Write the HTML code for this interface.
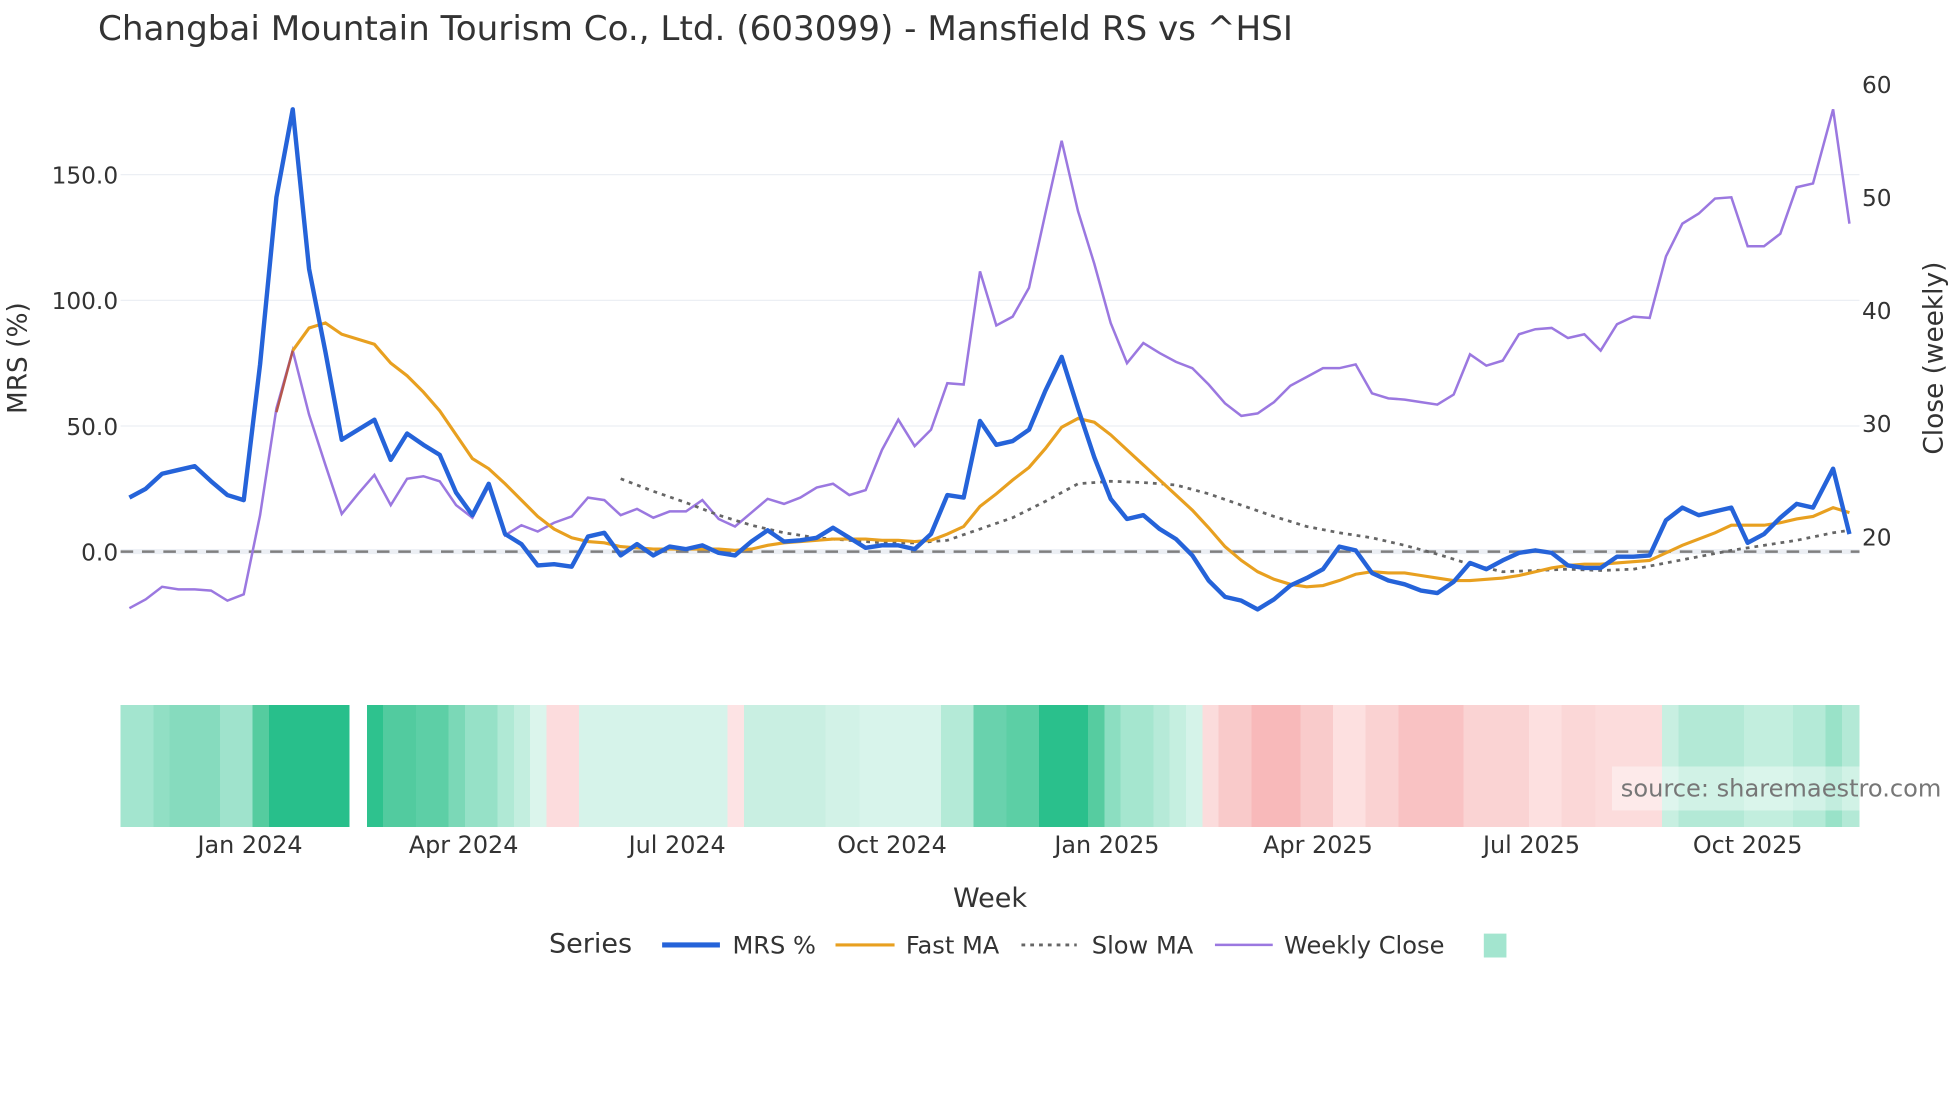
<!DOCTYPE html>
<html><head><meta charset="utf-8"><style>html,body{margin:0;padding:0;background:#fff;}svg{display:block}</style></head>
<body>
<svg width="1960" height="1102" viewBox="0 0 1560 877" preserveAspectRatio="none" xmlns="http://www.w3.org/2000/svg" font-family="DejaVu Sans, Liberation Sans, sans-serif">
<rect width="1560" height="877" fill="#fff"/>
<text x="78" y="32" font-size="27.2" fill="#333">Changbai Mountain Tourism Co., Ltd. (603099) - Mansfield RS vs ^HSI</text>
<g stroke="#eceff4" stroke-width="1">
<line x1="96" y1="139" x2="1480" y2="139"/><line x1="96" y1="239" x2="1480" y2="239"/><line x1="96" y1="339" x2="1480" y2="339"/>
</g>
<line x1="96" y1="439" x2="1480" y2="439" stroke="#eceff4" stroke-width="4"/>
<line x1="96" y1="439" x2="1480" y2="439" stroke="#7f7f7f" stroke-width="2" stroke-dasharray="10,7"/>
<g font-size="18.5" fill="#333">
<text x="94" y="146" text-anchor="end">150.0</text>
<text x="94" y="246" text-anchor="end">100.0</text>
<text x="94" y="346" text-anchor="end">50.0</text>
<text x="94" y="446" text-anchor="end">0.0</text>
<text x="1482" y="74">60</text><text x="1482" y="164">50</text><text x="1482" y="254">40</text><text x="1482" y="344">30</text><text x="1482" y="434">20</text>
</g>
<text transform="translate(21,285) rotate(-90)" font-size="21" fill="#333" text-anchor="middle">MRS (%)</text>
<text transform="translate(1546,285) rotate(-90)" font-size="21" fill="#333" text-anchor="middle">Close (weekly)</text>

<polyline fill="none" stroke="#9b78e0" stroke-width="2" points="103,484 116,477 129,467 142,469 155,469 168,470 181,478 194,473 207,410 220,325 233,279 246,330 259,370 272,409 285,393 298,378 311,402 324,381 337,379 350,383 363,402 376,412 389,387 402,426 415,418 428,423 441,416 455,411 468,396 481,398 494,410 507,405 520,412 533,407 546,407 559,398 572,413 585,419 598,408 611,397 624,401 637,396 650,388 663,385 676,394 689,390 702,358 715,334 728,355 741,342 754,305 767,306 780,216 793,259 806,252 819,229 832,170 845,112 858,168 871,210 884,257 897,289 910,273 923,281 936,288 949,293 962,306 975,321 988,331 1001,329 1014,320 1027,307 1040,300 1053,293 1066,293 1079,290 1092,313 1105,317 1118,318 1131,320 1144,322 1157,314 1170,282 1183,291 1196,287 1209,266 1222,262 1235,261 1248,269 1261,266 1274,279 1287,258 1300,252 1313,253 1326,204 1339,178 1352,170 1365,158 1378,157 1391,196 1404,196 1417,186 1430,149 1443,146 1459,87 1472,178"/>
<polyline fill="none" stroke="#666" stroke-width="2.2" stroke-dasharray="3,4" points="494,381 520,391 546,400 572,410 598,418 624,424 650,428 676,430 702,432 728,432 754,430 780,421 806,412 832,399 858,385 884,383 910,384 936,386 962,393 988,402 1014,411 1040,419 1066,424 1092,428 1118,434 1144,441 1170,449 1196,455 1222,454 1248,453 1274,454 1300,453 1326,448 1352,443 1378,438 1404,434 1430,430 1459,424 1472,422"/>
<polyline fill="none" stroke="#b5564e" stroke-width="2" points="220,328 233,279"/>
<polyline fill="none" stroke="#e8a020" stroke-width="2.5" points="233,279 246,261 259,257 272,266 285,270 298,274 311,289 324,299 337,312 350,327 363,346 376,365 389,373 402,385 415,398 428,411 441,421 455,428 468,431 481,432 494,435 507,436 520,437 533,437 546,437 559,437 572,437 585,438 598,437 611,434 624,432 637,431 650,430 663,429 676,429 689,429 702,430 715,430 728,431 741,430 754,425 767,419 780,403 793,393 806,382 819,372 832,357 845,340 858,333 871,336 884,346 897,358 910,370 923,382 936,394 949,406 962,420 975,435 988,446 1001,455 1014,461 1027,465 1040,467 1053,466 1066,462 1079,457 1092,455 1105,456 1118,456 1131,458 1144,460 1157,462 1170,462 1183,461 1196,460 1209,458 1222,455 1235,452 1248,450 1261,449 1274,449 1287,448 1300,447 1313,446 1326,440 1339,434 1352,429 1365,424 1378,418 1391,418 1404,418 1417,416 1430,413 1443,411 1459,404 1472,408"/>
<polyline fill="none" stroke="#2563d9" stroke-width="3.5" stroke-linejoin="round" points="103,396 116,389 129,377 142,374 155,371 168,383 181,394 194,398 207,290 220,157 233,87 246,214 259,280 272,350 285,342 298,334 311,366 324,345 337,354 350,362 363,392 376,410 389,385 402,425 415,433 428,450 441,449 455,451 468,427 481,424 494,442 507,433 520,442 533,435 546,437 559,434 572,440 585,442 598,431 611,422 624,431 637,430 650,428 663,420 676,428 689,436 702,434 715,434 728,437 741,425 754,394 767,396 780,335 793,354 806,351 819,342 832,311 845,284 858,325 871,364 884,397 897,413 910,410 923,421 936,429 949,442 962,462 975,475 988,478 1001,485 1014,477 1027,466 1040,460 1053,453 1066,435 1079,438 1092,456 1105,462 1118,465 1131,470 1144,472 1157,463 1170,448 1183,453 1196,446 1209,440 1222,438 1235,440 1248,450 1261,452 1274,452 1287,443 1300,443 1313,442 1326,414 1339,404 1352,410 1365,407 1378,404 1391,432 1404,425 1417,412 1430,401 1443,404 1459,373 1472,425"/>

<g shape-rendering="crispEdges">
<rect x="96" y="561" width="26" height="97" fill="#a3e5cf"/><rect x="122" y="561" width="13" height="97" fill="#91dfc4"/><rect x="135" y="561" width="40" height="97" fill="#86dbbe"/><rect x="175" y="561" width="26" height="97" fill="#9fe3cc"/><rect x="201" y="561" width="13" height="97" fill="#55cc9f"/><rect x="214" y="561" width="64" height="97" fill="#28bf8b"/>
<rect x="292" y="561" width="13" height="97" fill="#2ec28e"/><rect x="305" y="561" width="26" height="97" fill="#52cb9f"/><rect x="331" y="561" width="26" height="97" fill="#5dcfa6"/><rect x="357" y="561" width="13" height="97" fill="#7bd8b7"/><rect x="370" y="561" width="26" height="97" fill="#96e1c7"/><rect x="396" y="561" width="13" height="97" fill="#b0e9d5"/><rect x="409" y="561" width="13" height="97" fill="#c3eedf"/><rect x="422" y="561" width="13" height="97" fill="#dbf5ec"/><rect x="435" y="561" width="26" height="97" fill="#fcdcdd"/><rect x="461" y="561" width="118" height="97" fill="#d6f3ea"/><rect x="579" y="561" width="13" height="97" fill="#fde3e4"/><rect x="592" y="561" width="65" height="97" fill="#c9efe2"/><rect x="657" y="561" width="27" height="97" fill="#d2f2e7"/><rect x="684" y="561" width="65" height="97" fill="#d8f4eb"/><rect x="749" y="561" width="26" height="97" fill="#b4ead7"/><rect x="775" y="561" width="26" height="97" fill="#69d2ad"/><rect x="801" y="561" width="26" height="97" fill="#5ccfa5"/><rect x="827" y="561" width="39" height="97" fill="#2ac08c"/><rect x="866" y="561" width="13" height="97" fill="#56cca0"/><rect x="879" y="561" width="13" height="97" fill="#8cdec1"/><rect x="892" y="561" width="26" height="97" fill="#a5e6cf"/><rect x="918" y="561" width="13" height="97" fill="#b6ead8"/><rect x="931" y="561" width="13" height="97" fill="#c5efe0"/><rect x="944" y="561" width="13" height="97" fill="#d5f3e9"/><rect x="957" y="561" width="13" height="97" fill="#fbdcdc"/><rect x="970" y="561" width="26" height="97" fill="#f9caca"/><rect x="996" y="561" width="39" height="97" fill="#f8b9ba"/><rect x="1035" y="561" width="26" height="97" fill="#f9cbcb"/><rect x="1061" y="561" width="26" height="97" fill="#fde0e0"/><rect x="1087" y="561" width="26" height="97" fill="#fad2d2"/><rect x="1113" y="561" width="52" height="97" fill="#f9c2c3"/><rect x="1165" y="561" width="52" height="97" fill="#fad3d3"/><rect x="1217" y="561" width="26" height="97" fill="#fde0e0"/><rect x="1243" y="561" width="27" height="97" fill="#fbd7d7"/><rect x="1270" y="561" width="53" height="97" fill="#fcdcdc"/><rect x="1323" y="561" width="13" height="97" fill="#c8efe1"/><rect x="1336" y="561" width="52" height="97" fill="#b3e9d6"/><rect x="1388" y="561" width="39" height="97" fill="#c2eede"/><rect x="1427" y="561" width="26" height="97" fill="#b4ead7"/><rect x="1453" y="561" width="13" height="97" fill="#99e2c8"/><rect x="1466" y="561" width="14" height="97" fill="#b3e9d6"/>
</g>
<rect x="1283" y="610" width="197" height="35" fill="#fff" fill-opacity="0.4"/>
<text x="1290" y="634" font-size="19.2" fill="#777">source: sharemaestro.com</text>
<g font-size="19" fill="#333" text-anchor="middle">
<text x="199" y="679">Jan 2024</text><text x="369" y="679">Apr 2024</text><text x="539" y="679">Jul 2024</text><text x="710" y="679">Oct 2024</text><text x="881" y="679">Jan 2025</text><text x="1049" y="679">Apr 2025</text><text x="1219" y="679">Jul 2025</text><text x="1391" y="679">Oct 2025</text>
</g>
<text x="788" y="722" font-size="21.5" fill="#333" text-anchor="middle">Week</text>
<text x="437" y="758" font-size="21.5" fill="#333">Series</text>
<line x1="527" y1="752" x2="573" y2="752" stroke="#2563d9" stroke-width="4"/>
<text x="583" y="759" font-size="19.2" fill="#333">MRS %</text>
<line x1="665" y1="752" x2="712" y2="752" stroke="#e8a020" stroke-width="2.5"/>
<text x="721" y="759" font-size="19.2" fill="#333">Fast MA</text>
<line x1="813" y1="752" x2="857" y2="752" stroke="#666" stroke-width="2.2" stroke-dasharray="3,4"/>
<text x="869" y="759" font-size="19.2" fill="#333">Slow MA</text>
<line x1="967" y1="752" x2="1013" y2="752" stroke="#9b78e0" stroke-width="2"/>
<text x="1022" y="759" font-size="19.2" fill="#333">Weekly Close</text>
<rect x="1181" y="743" width="18" height="19" fill="#a3e5cf"/>
</svg>
</body></html>
